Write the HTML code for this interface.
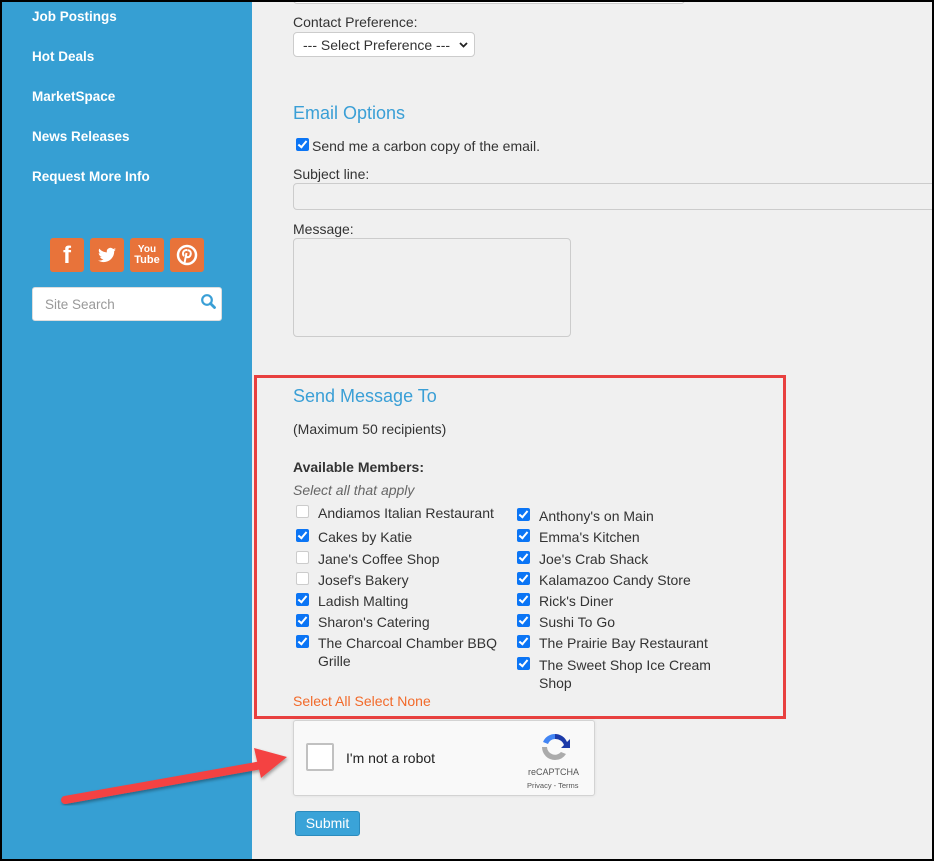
<!DOCTYPE html>
<html><head><meta charset="utf-8"><style>
*{box-sizing:border-box;margin:0;padding:0}
body{width:934px;height:861px;position:relative;background:#f0f0f0;font-family:"Liberation Sans",Arial,sans-serif;overflow:hidden;color:#333}
.a{position:absolute;white-space:nowrap}
#side{position:absolute;left:0;top:0;width:252px;height:861px;background:#369fd3}
.nav{position:absolute;left:32px;color:#fff;font-weight:bold;font-size:13.5px;font-family:"Liberation Sans",sans-serif}
.soc{position:absolute;top:238px;width:34px;height:34px;background:#e8733a;border-radius:3px;color:#fff;text-align:center}
.lbl{font-size:14px;color:#333}
.cb{position:absolute;width:13px;height:13px;border-radius:2px}
.on{background:#0b75f5}
.on::after{content:"";position:absolute;left:4px;top:1px;width:3px;height:7px;border:solid #fff;border-width:0 2px 2px 0;transform:rotate(40deg)}
.off{background:#fff;border:1px solid #ccc}
.t{position:absolute;font-size:14px;color:#333;line-height:18px}
</style></head><body>
<div id="side">
<div class="nav" style="top:9px">Job Postings</div>
<div class="nav" style="top:49px">Hot Deals</div>
<div class="nav" style="top:89px">MarketSpace</div>
<div class="nav" style="top:129px">News Releases</div>
<div class="nav" style="top:169px">Request More Info</div>
<div class="soc" style="left:50px;font:bold 24px 'Liberation Sans';line-height:36px">f</div>
<div class="soc" style="left:90px"><svg width="34" height="34" viewBox="0 0 34 34"><path fill="#fff" d="M26 11.5c-.7.3-1.4.5-2.1.6.8-.5 1.3-1.2 1.6-2-.7.4-1.5.7-2.3.9a3.7 3.7 0 0 0-6.3 3.4c-3.1-.2-5.8-1.6-7.6-3.8-1 1.7-.5 3.8 1.1 4.9-.6 0-1.2-.2-1.7-.5 0 1.8 1.3 3.3 3 3.700-.6.2-1.1.2-1.700.1.5 1.5 1.9 2.5 3.500 2.600A7.500 7.500 0 0 1 8 22.400c1.700 1.100 3.600 1.700 5.700 1.700 6.800 0 10.700-5.800 10.500-11 .7-.5 1.300-1.100 1.800-1.800z"/></svg></div>
<div class="soc" style="left:130px;font:bold 10px 'Liberation Sans';line-height:11px;padding-top:6px">You<br><span style="font-size:11px">Tube</span></div>
<div class="soc" style="left:170px"><svg width="34" height="34" viewBox="0 0 34 34"><circle cx="17" cy="17" r="9" fill="none" stroke="#fff" stroke-width="2.5"/><path d="M17 12c-3 0-4 2-4 3.5 0 1 .5 2 1.300 2.300M17.300 12.300c2.500 0 3.500 1.500 3.500 3 0 2.500-1.500 4-3 4-1 0-1.500-.7-1.300-1.500M16.500 15l-2 10" fill="none" stroke="#fff" stroke-width="2"/></svg></div>
<div class="a" style="left:32px;top:287px;width:190px;height:34px;background:#fff;border-radius:3px;border:1px solid #ddd"></div>
<div class="a" style="left:45px;top:297px;font-size:13.5px;color:#999">Site Search</div>
<svg class="a" style="left:200px;top:293px" width="17" height="17" viewBox="0 0 17 17"><circle cx="7" cy="7" r="4.8" fill="none" stroke="#3a9fd6" stroke-width="2.2"/><path d="M10.500 10.500l4 4" stroke="#3a9fd6" stroke-width="2.8" stroke-linecap="round"/></svg>
</div>
<div class="a" style="left:293px;top:-10px;width:392px;height:14px;background:#fff;border:1px solid #ccc;border-radius:4px"></div>
<div class="a lbl" style="left:293px;top:14px">Contact Preference:</div>
<div class="a" style="left:293px;top:32px;width:182px;height:25px;background:#fff;border:1px solid #ccc;border-radius:4px;font-size:14px;padding:4px 0 0 9px">--- Select Preference ---<svg style="position:absolute;right:6px;top:9px" width="9" height="6" viewBox="0 0 9 6"><path d="M1 1l3.500 3.500L8 1" fill="none" stroke="#222" stroke-width="1.8"/></svg></div>
<div class="a" style="left:293px;top:103px;font-size:18px;color:#3a9fd6">Email Options</div>
<div class="cb on" style="left:296px;top:138px"></div>
<div class="a lbl" style="left:312px;top:138px">Send me a carbon copy of the email.</div>
<div class="a lbl" style="left:293px;top:166px">Subject line:</div>
<div class="a" style="left:293px;top:183px;width:660px;height:27px;border:1px solid #ccc;border-radius:4px"></div>
<div class="a lbl" style="left:293px;top:221px">Message:</div>
<div class="a" style="left:293px;top:238px;width:278px;height:99px;border:1px solid #ccc;border-radius:4px"></div>
<div class="a" style="left:254px;top:375px;width:532px;height:344px;border:3px solid #e8403f"></div>
<div class="a" style="left:293px;top:386px;font-size:18px;color:#3a9fd6">Send Message To</div>
<div class="a lbl" style="left:293px;top:421px">(Maximum 50 recipients)</div>
<div class="a lbl" style="left:293px;top:459px;font-weight:bold">Available Members:</div>
<div class="a lbl" style="left:293px;top:482px;font-style:italic;color:#666">Select all that apply</div>

<div class="cb off" style="left:296px;top:505px"></div><div class="t" style="left:318px;top:504px">Andiamos Italian Restaurant</div>
<div class="cb on" style="left:296px;top:529px"></div><div class="t" style="left:318px;top:528px">Cakes by Katie</div>
<div class="cb off" style="left:296px;top:551px"></div><div class="t" style="left:318px;top:550px">Jane's Coffee Shop</div>
<div class="cb off" style="left:296px;top:572px"></div><div class="t" style="left:318px;top:571px">Josef's Bakery</div>
<div class="cb on" style="left:296px;top:593px"></div><div class="t" style="left:318px;top:592px">Ladish Malting</div>
<div class="cb on" style="left:296px;top:614px"></div><div class="t" style="left:318px;top:613px">Sharon's Catering</div>
<div class="cb on" style="left:296px;top:635px"></div><div class="t" style="left:318px;top:634px">The Charcoal Chamber BBQ<br>Grille</div>

<div class="cb on" style="left:517px;top:508px"></div><div class="t" style="left:539px;top:507px">Anthony's on Main</div>
<div class="cb on" style="left:517px;top:529px"></div><div class="t" style="left:539px;top:528px">Emma's Kitchen</div>
<div class="cb on" style="left:517px;top:551px"></div><div class="t" style="left:539px;top:550px">Joe's Crab Shack</div>
<div class="cb on" style="left:517px;top:572px"></div><div class="t" style="left:539px;top:571px">Kalamazoo Candy Store</div>
<div class="cb on" style="left:517px;top:593px"></div><div class="t" style="left:539px;top:592px">Rick's Diner</div>
<div class="cb on" style="left:517px;top:614px"></div><div class="t" style="left:539px;top:613px">Sushi To Go</div>
<div class="cb on" style="left:517px;top:635px"></div><div class="t" style="left:539px;top:634px">The Prairie Bay Restaurant</div>
<div class="cb on" style="left:517px;top:657px"></div><div class="t" style="left:539px;top:656px">The Sweet Shop Ice Cream<br>Shop</div>

<div class="a lbl" style="left:293px;top:693px;color:#f26a2a">Select All Select None</div>

<div class="a" style="left:293px;top:720px;width:302px;height:76px;background:#f9f9f9;border:1px solid #d3d3d3;border-radius:3px;box-shadow:0 0 3px rgba(0,0,0,.08)"></div>
<div class="a" style="left:306px;top:743px;width:28px;height:28px;background:#fff;border:2px solid #c1c1c1;border-radius:2px"></div>
<div class="a" style="left:346px;top:750px;font-size:14px;color:#222">I'm not a robot</div>
<svg class="a" style="left:539px;top:731px" width="32" height="32" viewBox="0 0 32 32"><path d="M16 3a13 13 0 0 1 12 8l3-3v9h-9l3-3a9 9 0 0 0-9-6z" fill="#1c3aa9"/><path d="M16 3A13 13 0 0 0 4 11l5 2a8 8 0 0 1 7-5z" fill="#4285f4"/><path d="M3 16a13 13 0 0 0 13 13 13 13 0 0 0 11-6l-5-2a8 8 0 0 1-14-5z" fill="#ababab"/></svg>
<div class="a" style="left:528px;top:767px;font-size:9px;color:#555">reCAPTCHA</div>
<div class="a" style="left:527px;top:781px;font-size:7.5px;color:#555">Privacy - Terms</div>
<div class="a" style="left:295px;top:811px;width:65px;height:25px;background:#3aa3d8;border:1px solid #2b8bbd;border-radius:3px;color:#fff;font-size:14px;text-align:center;line-height:23px">Submit</div>

<svg class="a" style="left:0;top:0" width="934" height="861"><defs><filter id="s"><feDropShadow dx="1" dy="2" stdDeviation="1.5" flood-opacity=".35"/></filter></defs><g filter="url(#s)"><path d="M65 800L262 765" stroke="#f44242" stroke-width="8" stroke-linecap="round"/><path d="M254 748L287 757L261 778Z" fill="#f44242"/></g>
<rect x="0.5" y="0.5" width="933" height="860" fill="none" stroke="#000" stroke-width="3"/></svg>
</body></html>
